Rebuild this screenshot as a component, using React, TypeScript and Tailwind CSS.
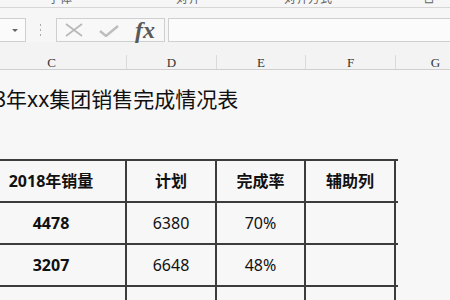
import React from "react";

const FONT = { fontFamily: '"Noto Sans", "Noto Sans CJK SC", sans-serif' };

const cols = [
  { letter: "C", width: 150 },
  { letter: "D", width: 90 },
  { letter: "E", width: 89 },
  { letter: "F", width: 90 },
  { letter: "G", width: 80 },
];

const rows = [
  ["4478", "6380", "70%"],
  ["3207", "6648", "48%"],
  ["4618", "", ""],
];

function Cell({ w, children, className = "" }: { w: string; children?: React.ReactNode; className?: string }) {
  return (
    <div className={`${w} shrink-0 flex items-center justify-center border-r-2 border-[#3c3c3c] ${className}`}>
      {children}
    </div>
  );
}

export default function App() {
  return (
    <div className="w-[450px] h-[300px] overflow-hidden bg-[#f7f7f7] text-[#111]" style={FONT}>
      {/* ribbon bottom (cut) */}
      <div className="h-[8px] overflow-hidden bg-[#f6f6f6] border-b border-[#d6d6d6] flex text-[12px] leading-[12px] text-[#666]">
        <span className="-mt-[7px] ml-[48px]">字体</span>
        <span className="-mt-[7px] ml-[104px]">对齐</span>
        <span className="-mt-[7px] ml-[84px]">对齐方式</span>
        <span className="-mt-[7px] ml-[92px]">⊡</span>
      </div>

      {/* formula bar */}
      <div className="h-[34px] bg-[#f6f6f6] pt-[10px] flex items-start">
        <div className="w-[26px] h-[24px] border border-l-0 border-[#cfcfcf] bg-[#fbfbfb] flex items-center justify-end pr-[7px]">
          <div className="w-0 h-0 border-l-[3px] border-r-[3px] border-t-[3px] border-l-transparent border-r-transparent border-t-[#666]" />
        </div>
        <div className="ml-[14px] mt-[6px] flex flex-col gap-[3px]">
          <div className="w-[1px] h-[2px] bg-[#aaa]" />
          <div className="w-[1px] h-[2px] bg-[#aaa]" />
          <div className="w-[1px] h-[2px] bg-[#aaa]" />
        </div>
        <div className="ml-[15px] w-[109px] h-[24px] border border-[#cfcfcf] bg-[#f8f8f8] flex items-center">
          <svg className="ml-[8px]" width="18" height="14" viewBox="0 0 18 14">
            <path d="M1 1 L17 13 M17 1 L1 13" stroke="#b8b8b8" strokeWidth="1.6" fill="none" />
          </svg>
          <svg className="ml-[16px] mt-[2px]" width="20" height="12" viewBox="0 0 20 12">
            <path d="M1 6 L7 11 L19 1" stroke="#bdbdbd" strokeWidth="2.4" fill="none" />
          </svg>
          <span
            className="ml-[16px] text-[24px] leading-none italic font-bold text-[#5a5a5a]"
            style={{ fontFamily: '"Liberation Serif", serif' }}
          >
            fx
          </span>
        </div>
        <div className="ml-[3px] flex-1 h-[24px] border border-r-0 border-[#cfcfcf] bg-[#fbfbfb]" />
      </div>

      {/* column headers */}
      <div className="h-[28px] bg-[#f3f3f3] border-b border-[#cfcfcf] flex items-end -ml-[23px]">
        {cols.map((c) => (
          <div
            key={c.letter}
            style={{ width: c.width, fontFamily: '"Liberation Serif", serif' }}
            className="shrink-0 h-[14px] border-r border-[#dadada] flex items-center justify-center text-[13px] leading-none text-[#333]"
          >
            {c.letter}
          </div>
        ))}
      </div>

      {/* title */}
      <div className="mt-[15px] -ml-[42px] text-[21px] leading-[28px] whitespace-nowrap">2018年xx集团销售完成情况表</div>

      {/* table */}
      <div className="mt-[46px] -ml-[23px] w-[421px] border-t-2 border-[#3c3c3c]">
        <div className="h-[42px] flex border-b-2 border-[#3c3c3c] text-[16px] font-bold">
          <Cell w="w-[150px]">2018年销量</Cell>
          <Cell w="w-[90px]">计划</Cell>
          <Cell w="w-[89px]">完成率</Cell>
          <Cell w="w-[90px]">辅助列</Cell>
        </div>
        {rows.map((r, i) => (
          <div key={i} className="h-[42px] flex border-b-2 border-[#3c3c3c] text-[16px]">
            <Cell w="w-[150px]" className="font-bold">{r[0]}</Cell>
            <Cell w="w-[90px]">{r[1]}</Cell>
            <Cell w="w-[89px]">{r[2]}</Cell>
            <Cell w="w-[90px]" />
          </div>
        ))}
      </div>
    </div>
  );
}
